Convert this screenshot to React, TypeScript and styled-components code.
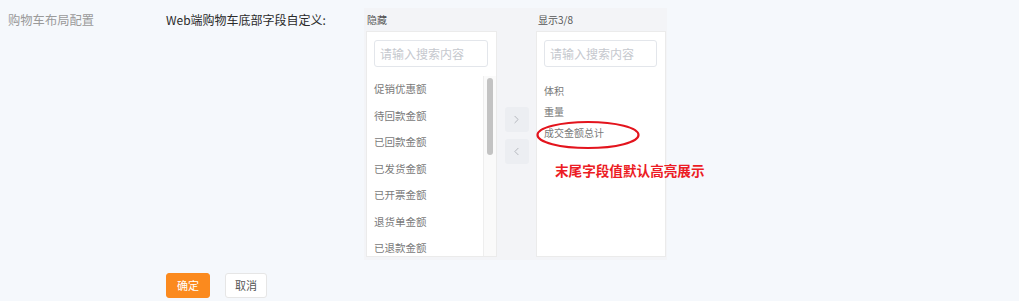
import React from 'react'
import styled, { createGlobalStyle } from 'styled-components'
import { ChevronRight, ChevronLeft } from 'lucide-react'

const GlobalStyle = createGlobalStyle`
    body {
        margin: 0;
        background: #f5f8fc;
        font-family: "Noto Sans CJK SC", "Noto Sans", "Liberation Sans", sans-serif;
    }
`

const Page = styled.div`
    display: flex;
    height: 301px;
    padding-left: 8px;
    box-sizing: border-box;
`

const SectionLabel = styled.div`
    width: 158px;
    padding-top: 13px;
    font-size: 12.3px;
    line-height: 14px;
    color: #9a9a9a;
`

const Main = styled.div`
    display: flex;
    flex-direction: column;
`

const FieldRow = styled.div`
    display: flex;
    margin-top: 8px;
`

const FieldLabel = styled.div`
    width: 198px;
    padding-top: 5px;
    font-size: 12px;
    line-height: 14px;
    color: #2a2a2a;
`

const Transfer = styled.div`
    display: flex;
    background: #f3f4f7;
    padding: 0 1px 3px 2px;
`

const Panel = styled.div`
    position: relative;
    display: flex;
    flex-direction: column;
`

const PanelTitle = styled.div<{ $indent: number }>`
    height: 23px;
    line-height: 23px;
    padding-left: ${p => p.$indent}px;
    font-size: 10px;
    color: #555;
`

const ListBox = styled.div<{ $width: number }>`
    width: ${p => p.$width}px;
    height: 226px;
    box-sizing: border-box;
    background: #fff;
    border: 1px solid #ebebeb;
    display: flex;
    flex-direction: column;
`

const SearchWrap = styled.div`
    padding: 8px 8px 0 7px;
`

const SearchInput = styled.input`
    width: 100%;
    height: 27px;
    box-sizing: border-box;
    border: 1px solid #e3e6eb;
    border-radius: 3px;
    padding: 0 5px;
    font-family: inherit;
    font-size: 12px;
    outline: none;
    &::placeholder {
        color: #c5c8ce;
    }
`

const ListBody = styled.div`
    display: flex;
    flex: 1;
    min-height: 0;
    margin-top: 9px;
`

const Items = styled.div<{ $top: number }>`
    flex: 1;
    padding-top: ${p => p.$top}px;
`

const Item = styled.div<{ $h: number; $size: number }>`
    height: ${p => p.$h}px;
    line-height: ${p => p.$h}px;
    padding-left: 7px;
    font-size: ${p => p.$size}px;
    color: #7a7a7a;
    white-space: nowrap;
    &:last-child {
        height: auto;
    }
`

const ScrollTrack = styled.div`
    width: 13px;
    border-left: 1px solid #eeeeee;
    background: #fafafa;
    padding: 2px 0 0 3px;
    box-sizing: border-box;
`

const ScrollThumb = styled.div`
    width: 6px;
    height: 77px;
    border-radius: 3px;
    background: #c3c3c3;
`

const Arrows = styled.div`
    width: 39px;
    display: flex;
    flex-direction: column;
    align-items: center;
    padding-top: 99px;
    gap: 7px;
`

const ArrowButton = styled.div`
    width: 24px;
    height: 25px;
    border-radius: 3px;
    background: #eceef2;
    color: #a8abb2;
    display: flex;
    align-items: center;
    justify-content: center;
`

const Ellipse = styled.svg`
    position: absolute;
    left: 0;
    top: 112px;
`

const Note = styled.div`
    position: absolute;
    left: 19px;
    top: 153px;
    line-height: 18px;
    font-size: 13.6px;
    font-weight: 700;
    color: #ec1c24;
    white-space: nowrap;
`

const Actions = styled.div`
    display: flex;
    gap: 15px;
    margin-top: 13px;
`

const Button = styled.div<{ $primary?: boolean }>`
    height: 25px;
    box-sizing: border-box;
    padding: 0 ${p => (p.$primary ? 10 : 9)}px;
    border-radius: 3px;
    line-height: 23px;
    font-size: 11px;
    color: ${p => (p.$primary ? '#fff' : '#555')};
    background: ${p => (p.$primary ? '#fb8a1e' : '#fff')};
    border: 1px solid ${p => (p.$primary ? '#fb8a1e' : '#e6e6e6')};
`

const hidden = ['促销优惠额', '待回款金额', '已回款金额', '已发货金额', '已开票金额', '退货单金额', '已退款金额']
const shown = ['体积', '重量', '成交金额总计']

export default function App() {
    return (
        <Page>
            <GlobalStyle />
            <SectionLabel>购物车布局配置</SectionLabel>
            <Main>
                <FieldRow>
                    <FieldLabel>Web端购物车底部字段自定义:</FieldLabel>
                    <Transfer>
                        <Panel>
                            <PanelTitle $indent={1}>隐藏</PanelTitle>
                            <ListBox $width={131}>
                                <SearchWrap>
                                    <SearchInput placeholder="请输入搜索内容" />
                                </SearchWrap>
                                <ListBody>
                                    <Items $top={0}>
                                        {hidden.map(t => <Item key={t} $h={26.5} $size={10.5}>{t}</Item>)}
                                    </Items>
                                    <ScrollTrack>
                                        <ScrollThumb />
                                    </ScrollTrack>
                                </ListBody>
                            </ListBox>
                        </Panel>
                        <Arrows>
                            <ArrowButton><ChevronRight size={13} strokeWidth={1.5} /></ArrowButton>
                            <ArrowButton><ChevronLeft size={13} strokeWidth={1.5} /></ArrowButton>
                        </Arrows>
                        <Panel>
                            <PanelTitle $indent={2}>显示3/8</PanelTitle>
                            <ListBox $width={130}>
                                <SearchWrap>
                                    <SearchInput placeholder="请输入搜索内容" />
                                </SearchWrap>
                                <ListBody>
                                    <Items $top={4}>
                                        {shown.map(t => <Item key={t} $h={21} $size={10}>{t}</Item>)}
                                    </Items>
                                </ListBody>
                            </ListBox>
                            <Ellipse width="104" height="30" viewBox="0 0 104 30">
                                <ellipse cx="52" cy="15" rx="50.5" ry="13" fill="none" stroke="#e3141d" strokeWidth="2.2" />
                            </Ellipse>
                            <Note>末尾字段值默认高亮展示</Note>
                        </Panel>
                    </Transfer>
                </FieldRow>
                <Actions>
                    <Button $primary>确定</Button>
                    <Button>取消</Button>
                </Actions>
            </Main>
        </Page>
    )
}
